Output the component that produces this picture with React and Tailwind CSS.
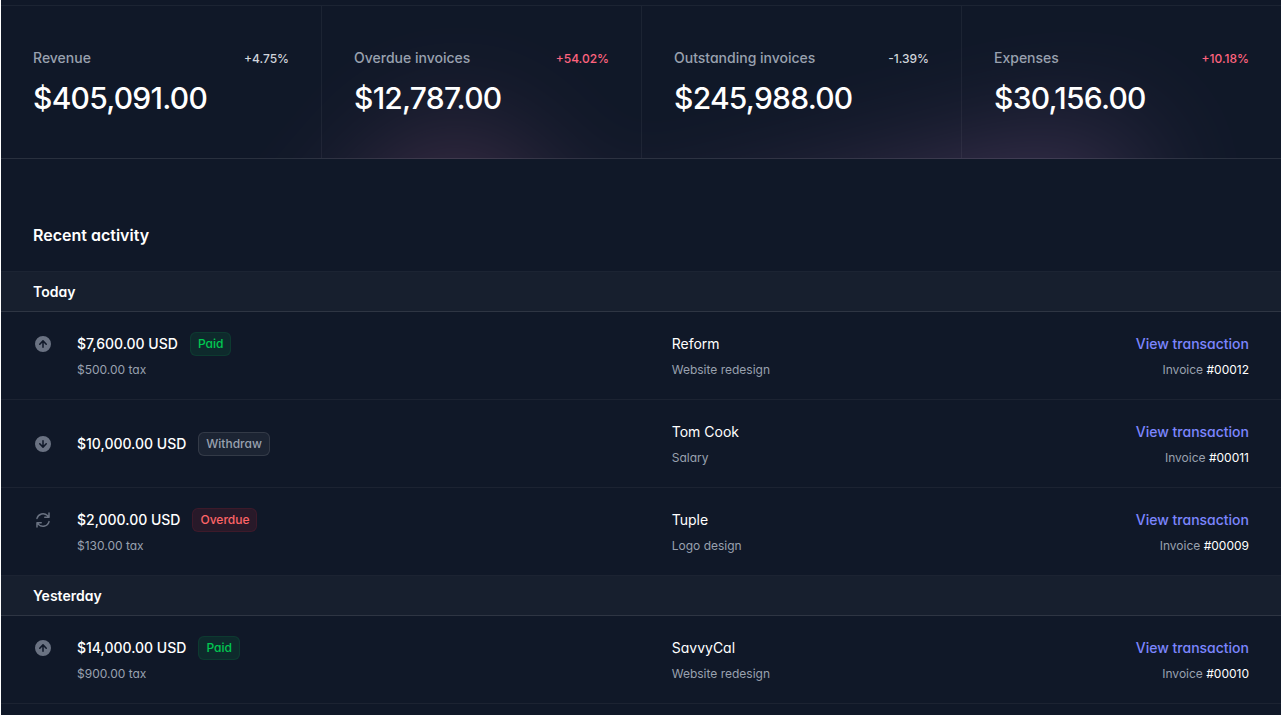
import React from 'react';
import clsx from 'clsx';

const stats = [
  { name: 'Revenue', value: '$405,091.00', change: '+4.75%', changeType: 'positive' },
  { name: 'Overdue invoices', value: '$12,787.00', change: '+54.02%', changeType: 'negative' },
  { name: 'Outstanding invoices', value: '$245,988.00', change: '-1.39%', changeType: 'positive' },
  { name: 'Expenses', value: '$30,156.00', change: '+10.18%', changeType: 'negative' },
];

const statusStyles = {
  Paid: 'text-green-500 bg-green-500/10 ring-green-500/10',
  Withdraw: 'text-gray-400 bg-white/5 ring-white/10',
  Overdue: 'text-red-400 bg-red-500/10 ring-red-500/10',
};

const UpIcon = () => (
  <svg viewBox="0 0 20 20" fill="currentColor" aria-hidden="true" className="h-6 w-5 flex-none text-gray-500">
    <path
      fillRule="evenodd"
      clipRule="evenodd"
      d="M10 18a8 8 0 1 0 0-16 8 8 0 0 0 0 16Zm-.75-4.75a.75.75 0 0 0 1.5 0V8.66l1.95 2.1a.75.75 0 1 0 1.1-1.02l-3.25-3.5a.75.75 0 0 0-1.1 0L6.2 9.74a.75.75 0 1 0 1.1 1.02l1.95-2.1v4.59Z"
    />
  </svg>
);

const DownIcon = () => (
  <svg viewBox="0 0 20 20" fill="currentColor" aria-hidden="true" className="h-6 w-5 flex-none text-gray-500">
    <path
      fillRule="evenodd"
      clipRule="evenodd"
      d="M10 18a8 8 0 1 0 0-16 8 8 0 0 0 0 16Zm.75-11.25a.75.75 0 0 0-1.5 0v4.59L7.3 9.24a.75.75 0 0 0-1.1 1.02l3.25 3.5a.75.75 0 0 0 1.1 0l3.25-3.5a.75.75 0 1 0-1.1-1.02l-1.95 2.1V6.75Z"
    />
  </svg>
);

const RefreshIcon = () => (
  <svg viewBox="0 0 20 20" fill="currentColor" aria-hidden="true" className="h-6 w-5 flex-none text-gray-500">
    <path
      fillRule="evenodd"
      clipRule="evenodd"
      d="M15.312 11.424a5.5 5.5 0 0 1-9.201 2.466l-.312-.311h2.433a.75.75 0 0 0 0-1.5H3.989a.75.75 0 0 0-.75.75v4.242a.75.75 0 0 0 1.5 0v-2.43l.31.31a7 7 0 0 0 11.712-3.138.75.75 0 0 0-1.449-.39Zm1.23-3.723a.75.75 0 0 0 .219-.53V2.929a.75.75 0 0 0-1.5 0V5.36l-.31-.31A7 7 0 0 0 3.239 8.188a.75.75 0 1 0 1.448.389A5.5 5.5 0 0 1 13.89 6.11l.311.31h-2.432a.75.75 0 0 0 0 1.5h4.243a.75.75 0 0 0 .53-.219Z"
    />
  </svg>
);

const days = [
  {
    name: 'Today',
    transactions: [
      {
        invoice: '00012',
        amount: '$7,600.00 USD',
        tax: '$500.00',
        status: 'Paid',
        client: 'Reform',
        description: 'Website redesign',
        icon: UpIcon,
      },
      {
        invoice: '00011',
        amount: '$10,000.00 USD',
        status: 'Withdraw',
        client: 'Tom Cook',
        description: 'Salary',
        icon: DownIcon,
      },
      {
        invoice: '00009',
        amount: '$2,000.00 USD',
        tax: '$130.00',
        status: 'Overdue',
        client: 'Tuple',
        description: 'Logo design',
        icon: RefreshIcon,
      },
    ],
  },
  {
    name: 'Yesterday',
    transactions: [
      {
        invoice: '00010',
        amount: '$14,000.00 USD',
        tax: '$900.00',
        status: 'Paid',
        client: 'SavvyCal',
        description: 'Website redesign',
        icon: UpIcon,
      },
    ],
  },
];

const Stats = () => (
  <header className="relative isolate overflow-hidden pt-[5px]">
    <dl className="grid grid-cols-4 border-t border-b border-t-white/5 border-b-white/10">
      {stats.map((stat, index) => (
        <div
          key={stat.name}
          className={clsx(
            'flex flex-wrap items-baseline justify-between gap-x-4 gap-y-2 px-8 py-10',
            index > 0 && 'border-l border-white/5'
          )}
        >
          <dt className="text-sm/6 font-medium text-gray-400">{stat.name}</dt>
          <dd
            className={clsx(
              'text-xs font-medium',
              stat.changeType === 'negative' ? 'text-rose-400' : 'text-gray-300'
            )}
          >
            {stat.change}
          </dd>
          <dd className="w-full flex-none text-3xl/10 font-medium tracking-tight text-white">{stat.value}</dd>
        </div>
      ))}
    </dl>

    {/* Soft glow behind the stats */}
    <div aria-hidden="true" className="absolute top-full left-1/2 -z-10 -mt-10 -ml-96 opacity-30 blur-3xl">
      <div className="aspect-1154/678 w-[1140px] bg-linear-to-br from-[#ff80b5] to-[#9089fc] [clip-path:polygon(100%_38.5%,82.6%_100%,60.2%_37.7%,52.4%_32.1%,47.5%_41.8%,45.2%_65.6%,27.5%_23.4%,0.1%_35.3%,17.9%_0%,27.7%_23.4%,76.2%_2.5%,74.2%_56%,100%_38.5%)]" />
    </div>
  </header>
);

const TransactionRow = ({ transaction }) => {
  const Icon = transaction.icon;

  return (
    <tr className="shadow-[inset_0_-1px_0_rgba(255,255,255,0.05)]">
      <td className="w-[52.4%] py-5 pr-6 pl-8">
        <div className="flex gap-x-6">
          <Icon />
          <div className="flex-auto">
            <div className="flex items-start gap-x-3">
              <div className="text-sm/6 font-medium text-white">{transaction.amount}</div>
              <div
                className={clsx(
                  'rounded-md px-2 py-1 text-xs font-medium ring-1 ring-inset',
                  statusStyles[transaction.status]
                )}
              >
                {transaction.status}
              </div>
            </div>
            {transaction.tax && <div className="mt-1 text-xs/5 text-gray-400">{transaction.tax} tax</div>}
          </div>
        </div>
      </td>
      <td className="py-5 pr-6">
        <div className="text-sm/6 text-white">{transaction.client}</div>
        <div className="mt-1 text-xs/5 text-gray-400">{transaction.description}</div>
      </td>
      <td className="py-5 pr-8 text-right">
        <div className="flex justify-end">
          <a href="#" className="text-sm/6 font-medium text-indigo-400 hover:text-indigo-300">
            View transaction
          </a>
        </div>
        <div className="mt-1 text-xs/5 text-gray-400">
          Invoice <span className="text-white">#{transaction.invoice}</span>
        </div>
      </td>
    </tr>
  );
};

const App = () => {
  return (
    <div className="min-h-screen bg-white pr-1 pl-px">
      <main className="min-h-screen bg-gray-900 font-['Inter',sans-serif] [font-feature-settings:'cv11']">
        <Stats />

        <section className="pt-16">
          <h2 className="px-8 text-base font-semibold text-white">Recent activity</h2>
          <div className="mt-6 border-t border-white/5">
            <table className="w-full text-left">
              <tbody>
                {days.map((day) => (
                  <React.Fragment key={day.name}>
                    <tr className="bg-white/[0.03] shadow-[inset_0_-1px_0_rgba(255,255,255,0.1)]">
                      <th scope="colgroup" colSpan={3} className="px-8 py-2 text-sm/6 font-semibold text-white">
                        {day.name}
                      </th>
                    </tr>
                    {day.transactions.map((transaction) => (
                      <TransactionRow key={transaction.invoice} transaction={transaction} />
                    ))}
                  </React.Fragment>
                ))}
              </tbody>
            </table>
          </div>
        </section>
      </main>
    </div>
  );
};

export default App;
